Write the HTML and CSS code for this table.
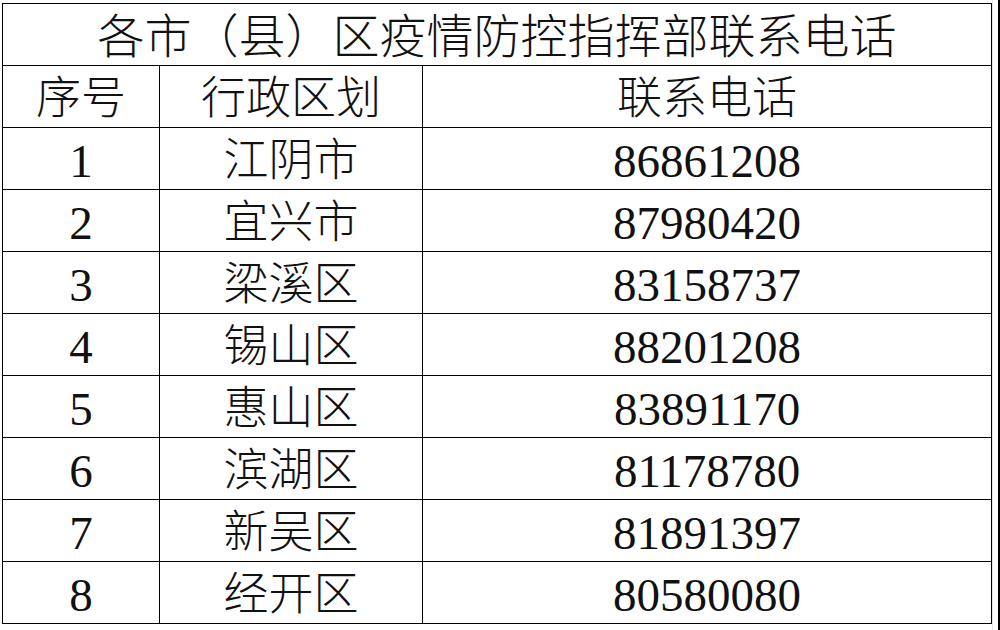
FILE: index.html
```html
<!DOCTYPE html>
<html lang="zh-CN">
<head>
<meta charset="utf-8">
<title>各市（县）区疫情防控指挥部联系电话</title>
<link rel="stylesheet" href="styles.css">
</head>
<body>
<div class="page">
  <div class="sheet">
    <table class="phones">
      <colgroup>
        <col class="c-no">
        <col class="c-area">
        <col class="c-tel">
      </colgroup>
      <thead>
        <tr><th class="title" colspan="3">各市（县）区疫情防控指挥部联系电话</th></tr>
        <tr><th>序号</th><th>行政区划</th><th>联系电话</th></tr>
      </thead>
      <tbody>
        <tr><td class="num">1</td><td>江阴市</td><td class="num">86861208</td></tr>
        <tr><td class="num">2</td><td>宜兴市</td><td class="num">87980420</td></tr>
        <tr><td class="num">3</td><td>梁溪区</td><td class="num">83158737</td></tr>
        <tr><td class="num">4</td><td>锡山区</td><td class="num">88201208</td></tr>
        <tr><td class="num">5</td><td>惠山区</td><td class="num">83891170</td></tr>
        <tr><td class="num">6</td><td>滨湖区</td><td class="num">81178780</td></tr>
        <tr><td class="num">7</td><td>新吴区</td><td class="num">81891397</td></tr>
        <tr><td class="num">8</td><td>经开区</td><td class="num">80580080</td></tr>
      </tbody>
    </table>
  </div>
  <div class="gap"></div>
  <div class="edge"></div>
</div>
</body>
</html>
```

FILE: styles.css
```css
html, body {
  margin: 0;
  padding: 0;
  background: #ffffff;
}

.page {
  display: flex;
  width: 1000px;
  height: 630px;
  overflow: hidden;
}

.sheet {
  padding: 3px 0 0 2px;
}

.phones {
  border-collapse: collapse;
  table-layout: fixed;
  width: 989px;
  font-family: "Liberation Serif", "Noto Sans CJK SC", serif;
  font-weight: 300;
  color: #111;
}

.c-no { width: 157px; }
.c-area { width: 263px; }
.c-tel { width: 569px; }

.phones th,
.phones td {
  border: 1px solid #000;
  height: 55px;
  padding: 6px 0 0 0;
  text-align: center;
  vertical-align: middle;
  font-size: 45px;
  font-weight: 300;
  line-height: 55px;
  white-space: nowrap;
}

.phones th.title {
  font-size: 47px;
}

.phones td.num {
  font-size: 47px;
  font-weight: 400;
}

.gap {
  width: 5px;
  border-left: 1px solid #e4e4e4;
}

.edge {
  flex: 1;
  background: #000;
}
```
